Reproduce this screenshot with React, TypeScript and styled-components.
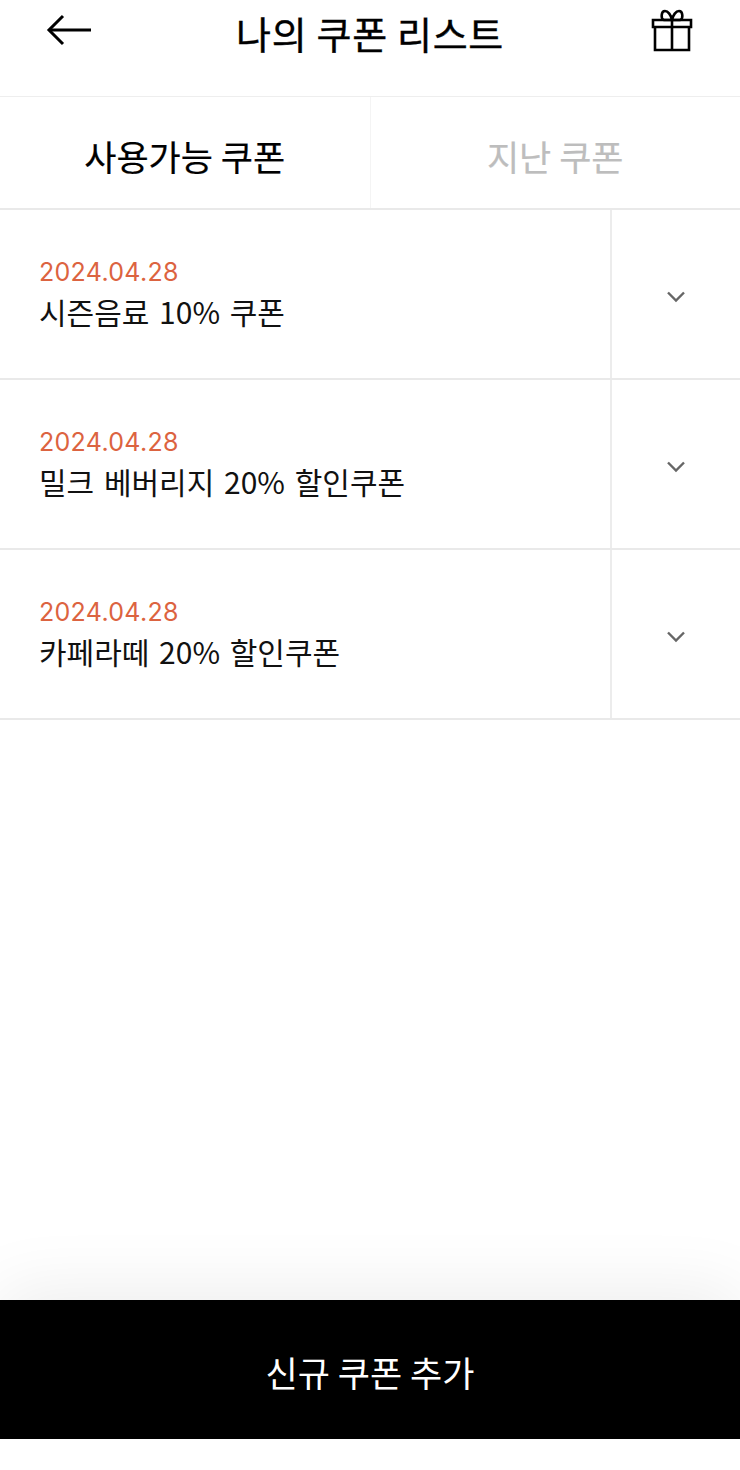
import { createGlobalStyle, styled } from "styled-components";

const GlobalStyle = createGlobalStyle`
  html, body {
    margin: 0;
    padding: 0;
    background: #fff;
  }
  * {
    box-sizing: border-box;
  }
`;

const KR = `"Noto Sans CJK KR", "Noto Sans", sans-serif`;

const Page = styled.div`
  width: 740px;
  height: 1470px;
  display: flex;
  flex-direction: column;
  overflow: hidden;
  font-family: ${KR};
  color: #000;
`;

const Header = styled.header`
  height: 97px;
  flex: none;
  display: flex;
  align-items: flex-start;
  justify-content: space-between;
  padding: 8px 46px 0 46px;
  border-bottom: 1px solid #eee;
`;

const IconButton = styled.div`
  width: 48px;
  height: 48px;
  display: flex;
  align-items: center;
  justify-content: center;
`;

const Title = styled.h1`
  margin: 0;
  padding-top: 1px;
  font-size: 38px;
  font-weight: 400;
  line-height: 48px;
  letter-spacing: 0.7px;
  -webkit-text-stroke: 0.4px #000;
`;

const Tabs = styled.div`
  height: 113px;
  flex: none;
  display: flex;
  border-bottom: 2px solid #e9e9e9;
`;

const Tab = styled.div<{ $active?: boolean }>`
  flex: 1;
  display: flex;
  align-items: center;
  justify-content: center;
  padding-top: 5px;
  font-size: 35px;
  font-weight: 400;
  -webkit-text-stroke: 0.2px currentColor;
  color: ${(props) => (props.$active ? "#000" : "#bdbdbd")};
  & + & {
    border-left: 1px solid #f4f4f4;
  }
`;

const List = styled.ul`
  flex: 1;
  margin: 0;
  padding: 0;
  list-style: none;
`;

const Row = styled.li`
  height: 170px;
  display: flex;
  border-bottom: 2px solid #e9e9e9;
`;

const RowBody = styled.div`
  flex: 1;
  padding: 46px 0 0 39px;
`;

const DateText = styled.div`
  font-family: Inter, "Open Sans", sans-serif;
  font-size: 25px;
  line-height: 32px;
  letter-spacing: 0.3px;
  color: #dc6340;
`;

const Name = styled.div`
  font-size: 30px;
  line-height: 42px;
  margin-top: 2px;
  word-spacing: 3px;
  color: #111;
`;

const RowToggle = styled.div`
  width: 130px;
  flex: none;
  display: flex;
  align-items: center;
  justify-content: center;
  padding-top: 5px;
  border-left: 2px solid #ececec;
`;

const Footer = styled.div`
  height: 170px;
  flex: none;
  position: relative;
  background: #fff;
`;

const AddButton = styled.button`
  display: flex;
  align-items: center;
  justify-content: center;
  width: 100%;
  height: 139px;
  border: 0;
  padding: 3px 0 0;
  background: #000;
  color: #fff;
  font-family: ${KR};
  font-size: 35px;
  font-weight: 400;
  box-shadow: 0 -8px 70px rgba(0, 0, 0, 0.08);
`;

const FooterSpace = styled.div`
  height: 31px;
  position: relative;
  background: #fff;
`;

const coupons = [
  { id: 1, date: "2024.04.28", name: "시즌음료 10% 쿠폰" },
  { id: 2, date: "2024.04.28", name: "밀크 베버리지 20% 할인쿠폰" },
  { id: 3, date: "2024.04.28", name: "카페라떼 20% 할인쿠폰" },
];

export default function App() {
  return (
    <Page>
      <GlobalStyle />
      <Header>
        <IconButton>
          <svg width="48" height="48" viewBox="0 0 48 48" fill="none" stroke="#000" strokeWidth="3">
            <path d="M3 22h42" />
            <path d="M17 8 3 22l14 14" />
          </svg>
        </IconButton>
        <Title>나의 쿠폰 리스트</Title>
        <IconButton>
          <svg width="48" height="48" viewBox="0 0 48 48" fill="none" stroke="#000" strokeWidth="2.6">
            <path d="M7 12h38v7H7z" />
            <path d="M9 19v23h34V19" />
            <path d="M26 12v30" />
            <path d="M26 12c-1-5-4-9-7-9-4 0-4.500 8-1 9zM26 12c1-5 4-9 7-9 4 0 4.500 8 1 9z" />
          </svg>
        </IconButton>
      </Header>
      <Tabs>
        <Tab $active>사용가능 쿠폰</Tab>
        <Tab>지난 쿠폰</Tab>
      </Tabs>
      <List>
        {coupons.map((coupon) => (
          <Row key={coupon.id}>
            <RowBody>
              <DateText>{coupon.date}</DateText>
              <Name>{coupon.name}</Name>
            </RowBody>
            <RowToggle>
              <svg width="18" height="12" viewBox="0 0 18 12" fill="none" stroke="#666" strokeWidth="2.4">
                <path d="m1 1.500 8 8 8-8" />
              </svg>
            </RowToggle>
          </Row>
        ))}
      </List>
      <Footer>
        <AddButton>신규 쿠폰 추가</AddButton>
        <FooterSpace />
      </Footer>
    </Page>
  );
}
